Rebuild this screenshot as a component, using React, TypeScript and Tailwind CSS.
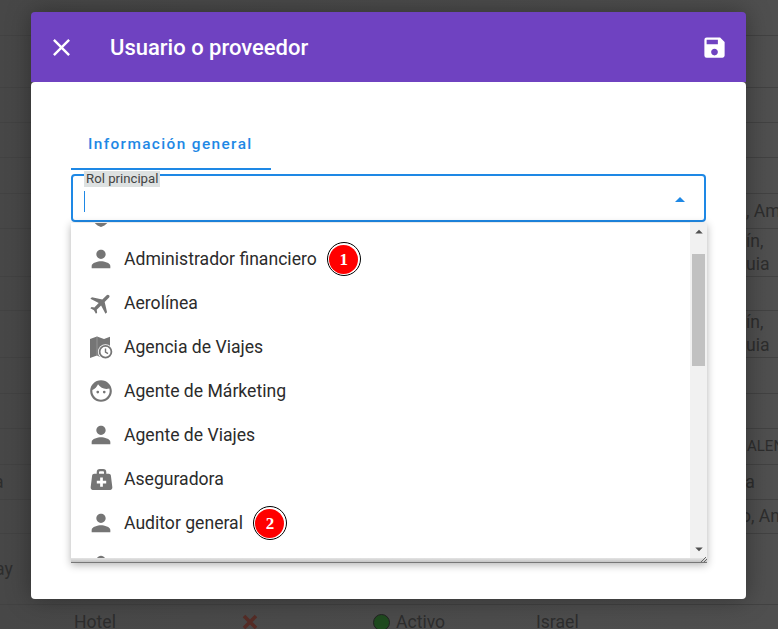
import { MdArrowDropDown, MdArrowDropUp, MdClose, MdFace, MdFlight, MdPerson, MdSave, MdVerifiedUser } from 'react-icons/md'

function MapClock() {
  return (
    <svg viewBox="0 0 24 24" width="24" height="24" fill="#757575">
      <path d="M1 4 8 1.5 15 4l6-2.2V12H11v10l-3-1.5L1 23z" />
      <path d="M8 1.5V20.500" stroke="#a8a8a8" strokeWidth="0.6" />
      <circle cx="16.500" cy="16.800" r="7.600" fill="#fff" />
      <circle cx="16.500" cy="16.800" r="5.900" fill="none" stroke="#757575" strokeWidth="1.800" />
      <path d="M16.500 13.500v3.600l2.500 1.600" fill="none" stroke="#757575" strokeWidth="1.400" />
    </svg>
  )
}

function MedicalBag() {
  return (
    <svg viewBox="0 0 24 24" width="25" height="25">
      <path d="M8.500 7V5a2 2 0 0 1 2-2h3a2 2 0 0 1 2 2v2" fill="none" stroke="#757575" strokeWidth="2.200" />
      <path
        d="M5 6.500h14c1 0 1.800.7 2 1.700l1.400 11.300c.2 1.300-.8 2.500-2 2.500H3.600c-1.200 0-2.200-1.200-2-2.500L3 8.200C3.200 7.200 4 6.500 5 6.500z"
        fill="#757575"
      />
      <path d="M12 10v9M7.500 14.500h9" stroke="#fff" strokeWidth="2.600" />
    </svg>
  )
}

function Badge({ n }: { n: string }) {
  return (
    <span className="ml-[10px] flex h-[34px] w-[34px] items-center justify-center rounded-full border border-black bg-white">
      <span className='flex h-[29px] w-[29px] items-center justify-center rounded-full bg-[#ff0000] pt-px font-["Liberation_Serif",serif] text-[17px] font-bold text-white'>
        {n}
      </span>
    </span>
  )
}

const items = [
  { label: 'Administrador financiero', icon: <MdPerson size={28} color="#757575" />, badge: '1' },
  { label: 'Aerolínea', icon: <MdFlight size={27} color="#757575" className="rotate-45" /> },
  { label: 'Agencia de Viajes', icon: <MapClock /> },
  { label: 'Agente de Márketing', icon: <MdFace size={26} color="#757575" /> },
  { label: 'Agente de Viajes', icon: <MdPerson size={28} color="#757575" /> },
  { label: 'Aseguradora', icon: <MedicalBag /> },
  { label: 'Auditor general', icon: <MdPerson size={28} color="#757575" />, badge: '2' },
]

const rows: { h: number; left?: string; right?: string; right2?: string }[] = [
  { h: 36 }, { h: 52 }, { h: 35 }, { h: 35 }, { h: 36 },
  { h: 35, right: ', Am' },
  { h: 48, right: 'ín,', right2: 'uia' },
  { h: 34 },
  { h: 47, right: 'ín,', right2: 'uia' },
  { h: 36 }, { h: 35 },
  { h: 36, right: 'ALEN' },
  { h: 35, left: 'a', right: 'ia' },
  { h: 34, right: 'o, Ant' },
  { h: 71, left: 'ay' },
]

function BackgroundTable() {
  return (
    <div className="w-full text-[17.6px] leading-[23px] text-[#2d2d2d]">
      {rows.map((r, i) => (
        <div
          key={i}
          className="relative flex items-center overflow-hidden border-b border-[#424242]"
          style={{ height: r.h }}
        >
          {r.left && <span className={r.left === 'ay' ? 'ml-[-5px]' : 'ml-[-6px]'}>{r.left}</span>}
          {r.right && (
            <span
              className={
                'absolute whitespace-pre ' +
                (r.right === 'ALEN' ? 'left-[747px] text-[15px]' : r.right === 'o, Ant' || r.right === 'ia' ? 'left-[741px]' : 'left-[746px]')
              }
            >
              {r.right}
              {r.right2 && <><br />{r.right2}</>}
            </span>
          )}
        </div>
      ))}
      <div className="flex h-[34px] items-center">
        <span className="ml-[74px] w-[168px]">Hotel</span>
        <span className="w-[131px]">
          <svg viewBox="0 0 16 16" width="16" height="16">
            <path d="M2 2l12 12M14 2 2 14" stroke="#552c26" strokeWidth="3.600" />
          </svg>
        </span>
        <span className="w-[23px]">
          <span className="block h-[17px] w-[17px] rounded-full border border-[#222] bg-[#1f4a1f]" />
        </span>
        <span className="w-[140px]">Activo</span>
        <span>Israel</span>
      </div>
    </div>
  )
}

export default function App() {
  return (
    <div className='relative h-[629px] w-[778px] overflow-hidden bg-gradient-to-r from-[#474747] to-[#4f4f4f] font-["Roboto",sans-serif]'>
      <BackgroundTable />

      <div className="absolute left-[31px] top-[12px] flex h-[587px] w-[715px] flex-col rounded-[4px] shadow-[0_0_24px_rgba(0,0,0,0.35)]">
        <header className="flex h-[70px] shrink-0 items-center rounded-t-[4px] bg-[#6f42c1] text-white">
          <MdClose size={29} className="ml-[16px]" />
          <h1 className="ml-[34px] flex-1 text-[22px] font-medium">Usuario o proveedor</h1>
          <MdSave size={27} className="mr-[18px]" />
        </header>

        <div className="relative flex-1 rounded-[4px] bg-white px-[40px]">
          <div className="mt-[48px] h-[40px] w-[200px] border-b-2 border-[#1e88e5] pl-[17px] text-[15.4px] leading-[29px] font-medium tracking-[1.375px] text-[#1e88e5]">
            Información general
          </div>

          <div className="relative mt-[4px] flex h-[48px] w-[635px] items-center rounded-[4px] border-2 border-[#1e88e5]">
            <span className="absolute left-[11px] top-[-5px] bg-[#dde1e1] px-[2px] text-[13.2px] leading-[16px] text-[#444]">Rol principal</span>
            <span className="ml-[11px] mt-[7px] h-[21px] w-px bg-[#1e88e5]" />
            <MdArrowDropUp size={24} color="#1e88e5" className="absolute right-[12px] top-[12px]" />
          </div>

          {/* dropdown panel */}
          <div className="relative mt-[1px] flex h-[340px] w-[636px] flex-col shadow-[0_2px_8px_rgba(0,0,0,0.3)]">
            <div className="flex h-[335px] min-h-0">
              <ul className="min-w-0 flex-1 overflow-hidden bg-white text-[17.6px] text-[#2b2b2b]">
                <li className="mt-[-30px] flex h-[44px] items-center">
                  <span className="flex w-[53px] shrink-0 justify-center pl-[7px]">
                    <MdVerifiedUser size={26} color="#757575" />
                  </span>
                </li>
                {items.map(it => (
                  <li key={it.label} className="flex h-[44px] items-center">
                    <span className="flex w-[53px] shrink-0 justify-center pl-[7px]">{it.icon}</span>
                    <span>{it.label}</span>
                    {it.badge && <Badge n={it.badge} />}
                  </li>
                ))}
                <li className="flex h-[44px] items-center">
                  <span className="flex w-[53px] shrink-0 justify-center pl-[7px]">
                    <MdPerson size={28} color="#757575" className="mt-[-4px]" />
                  </span>
                </li>
              </ul>
              <div className="flex w-[17px] shrink-0 flex-col items-center bg-[#f1f1f1]">
                <MdArrowDropUp size={18} color="#505050" className="shrink-0" />
                <div className="mt-[13px] h-[112px] w-[13px] shrink-0 bg-[#c1c1c1]" />
                <MdArrowDropDown size={18} color="#505050" className="mt-auto shrink-0" />
              </div>
            </div>
            <div className="relative h-[5px] border-b border-[#777] bg-gradient-to-b from-[#e4e4e4] to-[#c4c4c4]">
              <svg viewBox="0 0 10 5" className="absolute bottom-0 right-0 h-[5px] w-[10px]">
                <path d="M4 5 9 0M7 5l3-3" stroke="#666" strokeWidth="1" />
              </svg>
            </div>
          </div>
        </div>
      </div>
    </div>
  )
}
